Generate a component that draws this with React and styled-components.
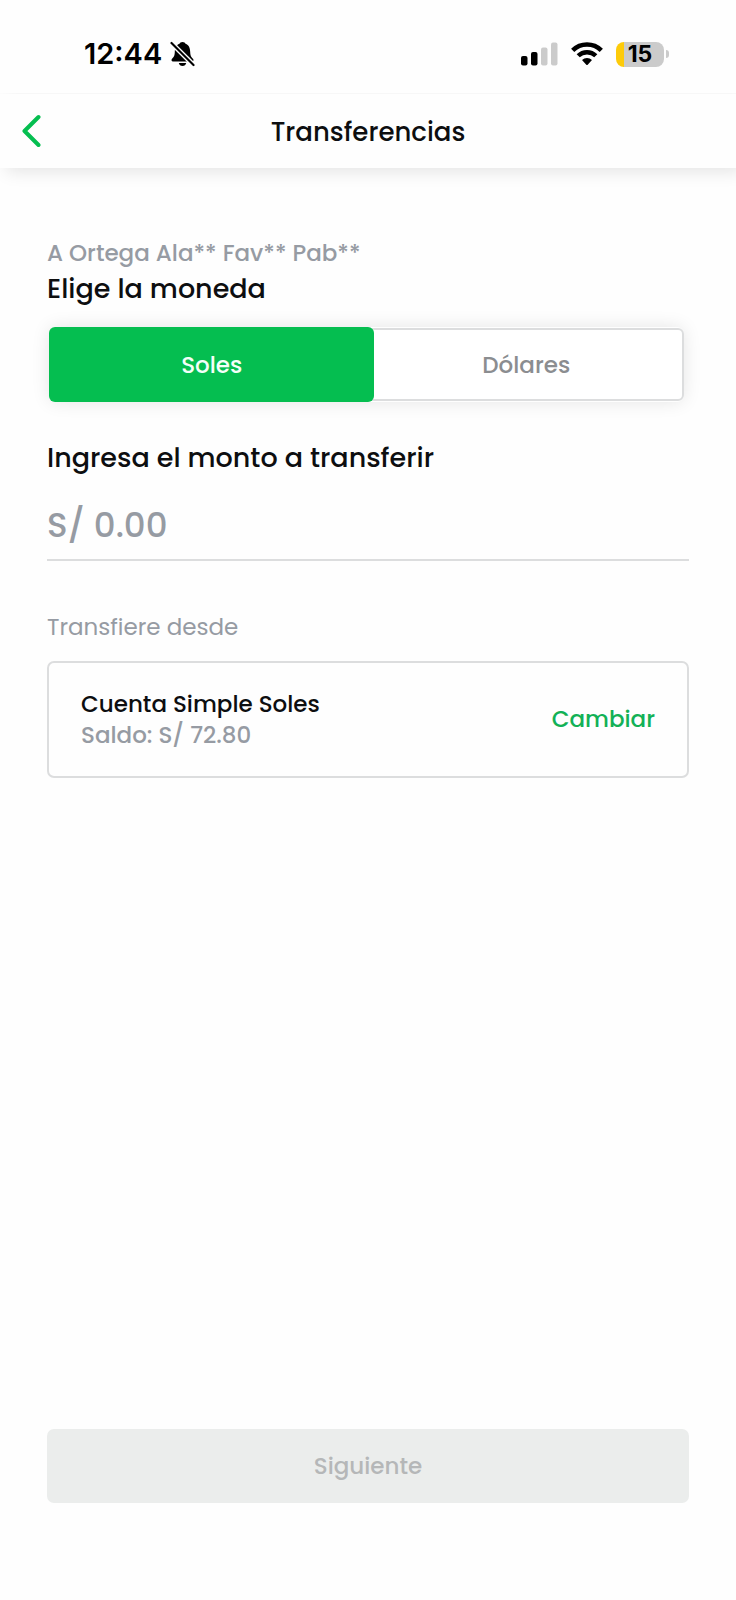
import React, { useState } from "react";
import styled, { createGlobalStyle } from "styled-components";

const color = {
  ink: "#0d0e10",
  muted: "#969ba3",
  line: "#dcddde",
  brand: "#05be50",
  link: "#12b156",
};

const GlobalStyle = createGlobalStyle`
  *, *::before, *::after { box-sizing: border-box; }
  body {
    margin: 0;
    background: #fefefe;
    color: ${color.ink};
    font-family: Poppins, Inter, "Liberation Sans", sans-serif;
  }
  button, input { font: inherit; }
`;

const Screen = styled.div`
  display: flex;
  flex-direction: column;
  min-height: 100vh;
`;

const StatusBar = styled.div`
  display: flex;
  align-items: center;
  justify-content: space-between;
  height: 94px;
  padding: 14px 67px 0 84px;
  color: #000;
  font-family: Inter, "Liberation Sans", sans-serif;
`;

const StatusGroup = styled.div`
  display: flex;
  align-items: center;
  gap: ${({ $gap }) => $gap}px;
`;

const Clock = styled.time`
  font-size: 29px;
  line-height: 32px;
  font-weight: 600;
`;

const Battery = styled.div`
  display: flex;
  align-items: center;
  gap: 2px;

  &::after {
    content: "";
    width: 3px;
    height: 8px;
    border-radius: 0 3px 3px 0;
    background: #cbcbcb;
  }
`;

const BatteryBody = styled.div`
  width: 48px;
  height: 25px;
  border-radius: 8px;
  background: linear-gradient(to right, #fdcb0a 8px, #cbcbcb 8px);
  font-size: 23px;
  line-height: 25px;
  font-weight: 700;
  text-align: center;
`;

const Header = styled.header`
  display: grid;
  grid-template-columns: 64px 1fr 64px;
  align-items: center;
  height: 74px;
  background: #fefefe;
  box-shadow: 6px 4px 16px rgba(0, 0, 0, 0.1);
  clip-path: inset(-1px 0 -24px 0);
`;

const BackButton = styled.button`
  display: flex;
  align-items: center;
  height: 64px;
  padding: 0 0 0 21px;
  border: 0;
  background: none;
  color: ${color.brand};
  cursor: pointer;
`;

const Title = styled.h1`
  margin: 0;
  padding-top: 2px;
  font-size: 26px;
  line-height: 36px;
  font-weight: 500;
  text-align: center;
`;

const Form = styled.form`
  display: flex;
  flex: 1;
  flex-direction: column;
  padding: 67px 47px 97px;
`;

const Caption = styled.p`
  margin: 0;
  color: ${color.muted};
  font-size: 23px;
  line-height: 36px;
  font-weight: ${({ $light }) => ($light ? 400 : 500)};
`;

const Heading = styled.h2`
  margin: 0;
  font-size: 27px;
  line-height: 36px;
  font-weight: 500;
`;

const Toggle = styled.div`
  display: flex;
  align-items: center;
  margin: 20px 5px 0 2px;
  border-radius: 7px;
  box-shadow: 0 0 18px rgba(0, 0, 0, 0.1);
`;

const Segment = styled.button`
  flex: ${({ $active }) => ($active ? "326 1 0" : "312 1 0")};
  height: ${({ $active }) => ($active ? 75 : 73)}px;
  margin-left: ${({ $active }) => ($active ? 0 : -6)}px;
  padding: 0;
  position: relative;
  z-index: ${({ $active }) => ($active ? 1 : 0)};
  border: ${({ $active }) => ($active ? "0" : `2px solid ${color.line}`)};
  border-radius: 6px;
  background: ${({ $active }) => ($active ? color.brand : "#fff")};
  color: ${({ $active }) => ($active ? "#f4fff8" : "#8b8d90")};
  font-size: 23px;
  font-weight: 500;
  cursor: pointer;
`;

const Field = styled.div`
  display: flex;
  flex-direction: column;
  gap: 16px;
  margin-top: ${({ $space }) => $space}px;
`;

const FieldLabel = styled.label`
  font-size: 27px;
  line-height: 36px;
  font-weight: 500;
`;

const AmountInput = styled.input`
  width: 100%;
  height: 69px;
  padding: 0;
  border: 0;
  border-bottom: 2px solid ${color.line};
  border-radius: 0;
  outline: 0;
  background: none;
  color: ${color.ink};
  font-size: 34px;
  font-weight: 500;

  &::placeholder {
    color: ${color.muted};
    opacity: 1;
  }
`;

const AccountCard = styled.div`
  display: flex;
  align-items: center;
  justify-content: space-between;
  min-height: 117px;
  padding: 0 32px;
  border: 2px solid ${color.line};
  border-radius: 7px;
`;

const AccountLine = styled.p`
  margin: 0;
  color: ${({ $muted }) => ($muted ? color.muted : color.ink)};
  font-size: 23px;
  line-height: 31px;
  font-weight: 500;
`;

const ChangeButton = styled.button`
  padding: 0;
  border: 0;
  background: none;
  color: ${color.link};
  font-size: 23px;
  line-height: 31px;
  font-weight: 500;
  cursor: pointer;
`;

const SubmitButton = styled.button`
  height: 74px;
  margin-top: auto;
  padding: 0;
  border: 0;
  border-radius: 7px;
  background: #ebedec;
  color: #b5b7b8;
  font-size: 23px;
  font-weight: 500;
`;

const BellOffIcon = () => (
  <svg width="25" height="26" viewBox="0 0 24 26" aria-label="Silencio">
    <path
      d="M12 1C10.300 1 9.500 1.800 9 2.800C5.600 4 4.400 7 4.300 11C4.200 15 3.200 16 1.500 17.800C.5 19 1 20.500 2.500 20.500H21.500C23 20.500 23.500 19 22.500 17.800C20.800 16 19.800 15 19.700 11C19.600 7 18.400 4 15 2.800C14.500 1.800 13.700 1 12 1Z"
      fill="currentColor"
    />
    <path d="M8.300 22H15.700C15.300 24 13.900 25 12 25S8.700 24 8.300 22Z" fill="currentColor" />
    <path d="M0 1L24 25" stroke="#fefefe" strokeWidth="4.800" />
    <path d="M1 2L23 24" stroke="currentColor" strokeWidth="2.200" strokeLinecap="round" />
  </svg>
);

const SignalIcon = () => (
  <svg width="37" height="24" viewBox="0 0 37 24" aria-label="Señal">
    <rect x="0" y="14" width="6.500" height="9.500" rx="2" fill="#000" />
    <rect x="10" y="10" width="6.500" height="13.500" rx="2" fill="#000" />
    <rect x="20" y="5.500" width="6.500" height="18" rx="2" fill="#cbcbcb" />
    <rect x="30" y="0.500" width="6.500" height="23" rx="2" fill="#cbcbcb" />
  </svg>
);

const WifiIcon = () => (
  <svg width="32" height="24" viewBox="0 0 32 24" fill="none" aria-label="Wi-Fi">
    <path d="M1.700 8.300A20.500 20.500 0 0 1 30.300 8.300" stroke="#000" strokeWidth="4.600" />
    <path d="M7.200 13.800A12.500 12.500 0 0 1 24.800 13.800" stroke="#000" strokeWidth="4.400" />
    <path d="M11 18A7.300 7.300 0 0 1 21 18L16.700 22.700Q16 23.500 15.300 22.700Z" fill="#000" />
  </svg>
);

const BackIcon = () => (
  <svg width="20" height="34" viewBox="0 0 20 34" fill="none" aria-hidden="true">
    <path
      d="M17.500 3L3.500 17L17.500 31"
      stroke="currentColor"
      strokeWidth="4"
      strokeLinecap="round"
      strokeLinejoin="round"
    />
  </svg>
);

export default function App() {
  const [currency, setCurrency] = useState("Soles");

  return (
    <>
      <GlobalStyle />
      <Screen>
        <StatusBar>
          <StatusGroup $gap={8}>
            <Clock>12:44</Clock>
            <BellOffIcon />
          </StatusGroup>
          <StatusGroup $gap={13}>
            <SignalIcon />
            <WifiIcon />
            <Battery>
              <BatteryBody>15</BatteryBody>
            </Battery>
          </StatusGroup>
        </StatusBar>
        <Header>
          <BackButton type="button" aria-label="Volver">
            <BackIcon />
          </BackButton>
          <Title>Transferencias</Title>
        </Header>
        <Form onSubmit={(event) => event.preventDefault()}>
          <Caption>A Ortega Ala** Fav** Pab**</Caption>
          <Heading id="currency">Elige la moneda</Heading>
          <Toggle role="group" aria-labelledby="currency">
            {["Soles", "Dólares"].map((name) => (
              <Segment
                key={name}
                type="button"
                $active={currency === name}
                aria-pressed={currency === name}
                onClick={() => setCurrency(name)}
              >
                {name}
              </Segment>
            ))}
          </Toggle>
          <Field $space={38}>
            <FieldLabel htmlFor="amount">Ingresa el monto a transferir</FieldLabel>
            <AmountInput id="amount" type="text" inputMode="decimal" placeholder="S/ 0.00" />
          </Field>
          <Field $space={48}>
            <Caption $light>Transfiere desde</Caption>
            <AccountCard>
              <div>
                <AccountLine>Cuenta Simple Soles</AccountLine>
                <AccountLine $muted>Saldo: S/ 72.80</AccountLine>
              </div>
              <ChangeButton type="button">Cambiar</ChangeButton>
            </AccountCard>
          </Field>
          <SubmitButton type="submit" disabled>
            Siguiente
          </SubmitButton>
        </Form>
      </Screen>
    </>
  );
}
